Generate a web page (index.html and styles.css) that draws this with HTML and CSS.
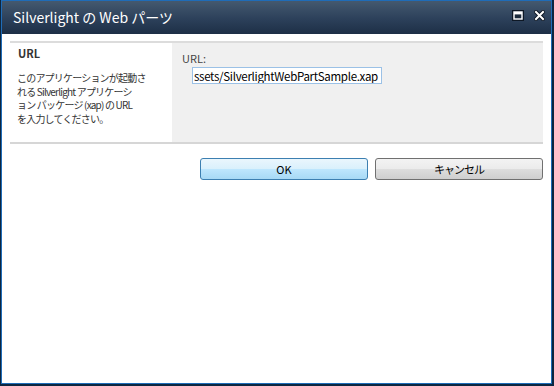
FILE: index.html
```html
<!DOCTYPE html>
<html lang="ja">
<head>
  <meta charset="UTF-8">
  <title>Silverlight の Web パーツ</title>
  <link rel="stylesheet" href="styles.css">
</head>
<body>
  <div class="dialog">
    <div class="frame">
      <div class="titlebar">
        <span class="title">Silverlight の Web パーツ</span>
        <div class="controls">
          <svg class="icon" width="12" height="11" viewBox="0 0 12 11">
            <rect x="0.5" y="0.5" width="11" height="10" fill="#1b2b3d" stroke="#0e1825"/>
            <rect x="2" y="2" width="8" height="7" fill="none" stroke="#fff" stroke-width="1.4"/>
            <rect x="2" y="2" width="8" height="2.4" fill="#fff"/>
          </svg>
          <svg class="icon" width="11" height="11" viewBox="0 0 11 11">
            <path d="M2 2 L9 9 M9 2 L2 9" stroke="#0e1825" stroke-width="4" stroke-linecap="square"/>
            <path d="M2 2 L9 9 M9 2 L2 9" stroke="#fff" stroke-width="2" stroke-linecap="square"/>
          </svg>
        </div>
      </div>

      <div class="content">
        <div class="section">
          <div class="section-head">
            <h3>URL</h3>
            <p>このアプリケーションが起動さ<br>れる Silverlight アプリケーシ<br>ョン パッケージ (xap) の URL<br>を入力してください。</p>
          </div>
          <div class="section-body">
            <label for="url">URL:</label>
            <input id="url" type="text" value="ssets/SilverlightWebPartSample.xap">
          </div>
        </div>

        <div class="buttons">
          <button class="btn btn-ok">OK</button>
          <button class="btn">キャンセル</button>
        </div>
      </div>
    </div>
  </div>
</body>
</html>
```

FILE: styles.css
```css
/* Dialog window */
body {
  margin: 0;
  font-family: "Noto Sans CJK JP", "Liberation Sans", sans-serif;
  background: #fff;
}
.dialog {
  width: 554px;
  height: 386px;
  box-sizing: border-box;
  border-left: 1px solid #0c2640;
  border-right: 2px solid #0c2640;
  border-bottom: 2px solid #0c2640;
}
.frame {
  height: 100%;
  box-sizing: border-box;
  border: 1px solid #1f6cb8;
  background: #fff;
}
.titlebar {
  height: 33px;
  display: flex;
  align-items: center;
  justify-content: space-between;
  padding: 0 6px 0 11px;
  background: linear-gradient(#44596f, #2c405a 55%, #1d2f46);
}
.title {
  color: #fff;
  font-size: 14px;
  margin-top: -1px;
}
.controls {
  display: flex;
  gap: 10px;
  align-items: center;
  margin-top: -4px;
}
.icon {
  display: block;
}

/* Content */
.content {
  padding: 7px 8px 0;
}
.section {
  display: grid;
  grid-template-columns: 162px 1fr;
  height: 99px;
  border-top: 2px solid #dcdcdc;
  border-bottom: 2px solid #d6d6d6;
}
.section-head {
  padding: 3px 6px 0 7px;
  color: #333;
}
.section-head h3 {
  margin: 0 0 0 1px;
  font-size: 11px;
  line-height: 15px;
  font-weight: bold;
}
.section-head p {
  margin: 10px 0 0;
  font-size: 10px;
  line-height: 13.5px;
  letter-spacing: -0.8px;
  white-space: nowrap;
}
.section-body {
  background: #f0f0f0;
  padding: 8px 0 0 10px;
  display: flex;
  flex-direction: column;
  align-items: flex-start;
}
.section-body label {
  font-size: 11px;
  line-height: 14px;
  color: #444;
}
.section-body input {
  margin: 2px 0 0 10px;
  width: 190px;
  height: 17px;
  box-sizing: border-box;
  padding: 0 1px;
  border: 1px solid #9bc1e6;
  font-family: "Noto Sans CJK JP", "Liberation Sans", sans-serif;
  font-size: 11.5px;
  letter-spacing: -0.3px;
  color: #000;
  background: #fff;
}

/* Buttons */
.buttons {
  display: flex;
  justify-content: flex-end;
  gap: 7px;
  margin-top: 14px;
}
.btn {
  width: 168px;
  height: 22px;
  padding: 0;
  border: 1px solid #707070;
  border-radius: 3px;
  background: linear-gradient(#f3f3f3, #ebebeb 50%, #dddddd 51%, #cfcfcf);
  font-family: "Noto Sans CJK JP", "Liberation Sans", sans-serif;
  font-size: 11px;
  letter-spacing: -1px;
  color: #000;
}
.btn-ok {
  border-color: #3c7fb1;
  letter-spacing: 0;
  background: linear-gradient(#eaf6fd, #d9f0fc 50%, #bee6fd 51%, #a7d9f5);
}
```
